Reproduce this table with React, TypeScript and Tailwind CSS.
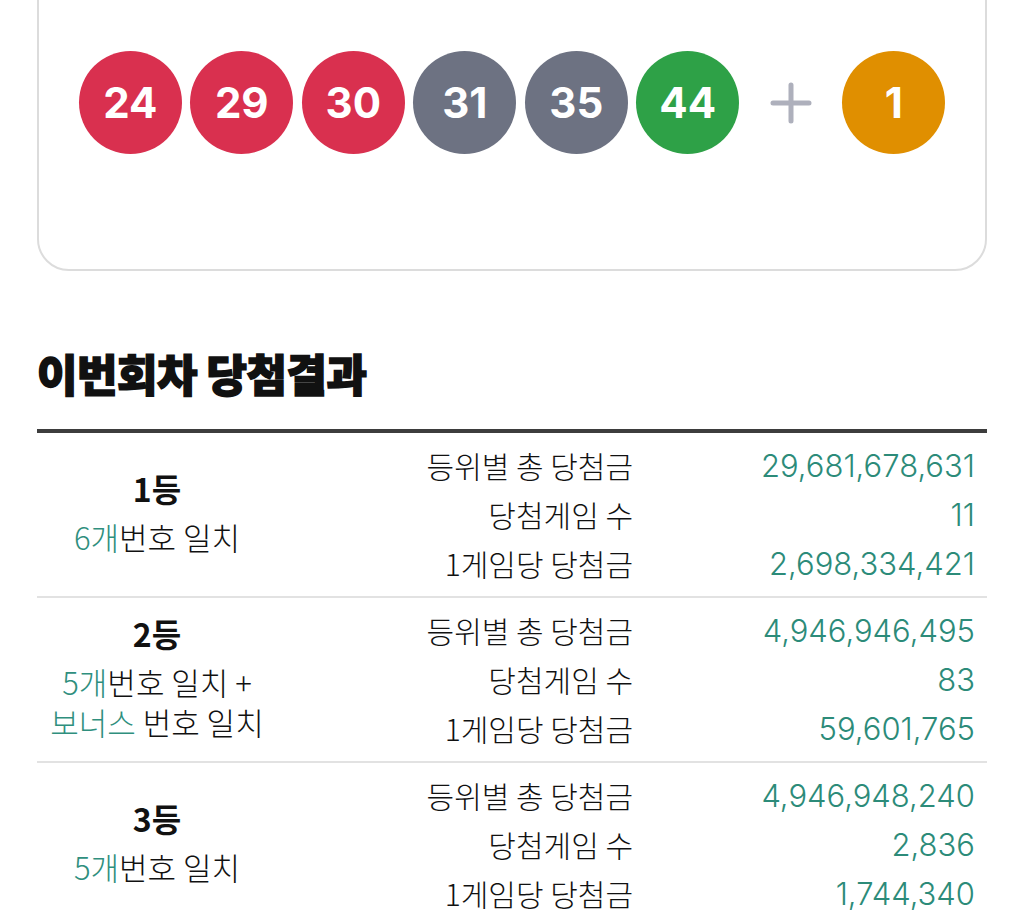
import React from "react";

const balls = [
  { n: "24", c: "bg-[#d9304f]" },
  { n: "29", c: "bg-[#d9304f]" },
  { n: "30", c: "bg-[#d9304f]" },
  { n: "31", c: "bg-[#6d7282]" },
  { n: "35", c: "bg-[#6d7282]" },
  { n: "44", c: "bg-[#2ea147]" },
];

type Seg = { t: string; hl?: boolean };

const rows: { rank: string; sub: Seg[][]; vals: string[] }[] = [
  {
    rank: "1등",
    sub: [[{ t: "6개", hl: true }, { t: "번호 일치" }]],
    vals: ["29,681,678,631", "11", "2,698,334,421"],
  },
  {
    rank: "2등",
    sub: [
      [{ t: "5개", hl: true }, { t: "번호 일치 +" }],
      [{ t: "보너스", hl: true }, { t: "\u00a0번호 일치" }],
    ],
    vals: ["4,946,946,495", "83", "59,601,765"],
  },
  {
    rank: "3등",
    sub: [[{ t: "5개", hl: true }, { t: "번호 일치" }]],
    vals: ["4,946,948,240", "2,836", "1,744,340"],
  },
];

const labels = ["등위별 총 당첨금", "당첨게임 수", "1게임당 당첨금"];

function Ball({ n, c }: { n: string; c: string }) {
  return (
    <div
      className={`${c} w-[103px] h-[103px] shrink-0 rounded-full flex items-center justify-center text-white text-[42px] font-bold leading-none font-['Inter','Liberation_Sans',sans-serif]`}
    >
      {n}
    </div>
  );
}

export default function App() {
  return (
    <div className="min-h-[922px] bg-white px-[37px] text-[#111] font-['Noto_Sans_CJK_KR',sans-serif] overflow-hidden">
      <div className="-mt-[50px] rounded-[32px] border-2 border-[#dcdcdc] pt-[99px] pb-[115px] flex items-center justify-center gap-[8.5px]">
        {balls.map((b) => (
          <Ball key={b.n} n={b.n} c={b.c} />
        ))}
        <div className="w-[86px] flex items-center justify-center">
          <svg width="42" height="42" viewBox="0 0 42 42" fill="none">
            <path
              d="M21 3V39M3 21H39"
              stroke="#aeb0bc"
              strokeWidth="5"
              strokeLinecap="round"
            />
          </svg>
        </div>
        <Ball n="1" c="bg-[#e08f00]" />
      </div>

      <h2 className="mt-[78px] text-[44px] leading-[48px] font-black tracking-[-0.5px] [-webkit-text-stroke:1.5px_#111]">
        이번회차 당첨결과
      </h2>

      <div className="mt-[32px] border-t-4 border-[#3d3d3d]">
        {rows.map((r) => (
          <div key={r.rank} className="flex border-b-2 border-[#e2e2e2]">
            <div className="w-[240px] shrink-0 flex flex-col items-center justify-center text-center pb-[13px]">
              <div className="text-[32px] leading-[58px] font-semibold">
                {r.rank}
              </div>
              {r.sub.map((line, i) => (
                <div
                  key={i}
                  className="flex justify-center h-[40px] overflow-visible text-[31px] leading-[40px] font-light whitespace-pre"
                >
                  {line.map((s, j) => (
                    <span
                      key={j}
                      className={`inline-block h-[40px] leading-[40px] ${s.hl ? "text-[#2f8f7e]" : ""}`}
                    >
                      {s.t}
                    </span>
                  ))}
                </div>
              ))}
            </div>
            <div className="flex-1 grid grid-cols-[356px_1fr] py-2 pr-[12px] text-[30px] leading-[49px] font-light">
              {labels.map((l, i) => (
                <React.Fragment key={l}>
                  <div className="text-right">{l}</div>
                  <div className="text-right text-[31px] text-[#2c8b79] font-['Inter','Noto_Sans_CJK_KR',sans-serif]">
                    {r.vals[i]}
                  </div>
                </React.Fragment>
              ))}
            </div>
          </div>
        ))}
      </div>
    </div>
  );
}
